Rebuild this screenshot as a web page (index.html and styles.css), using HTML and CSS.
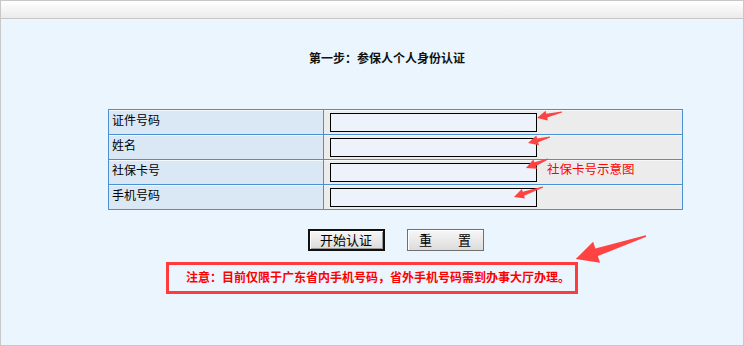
FILE: index.html
```html
<!DOCTYPE html>
<html lang="zh-CN">
<head>
    <meta charset="UTF-8"/>
    <title>参保人个人身份认证</title>
    <link rel="stylesheet" href="styles.css">
</head>
<body>
<div class="page">
    <div class="topbar"></div>
    <div class="main">
        <h3 class="step-title">第一步：参保人个人身份认证</h3>
        <div class="form-col">
            <table class="auth-table">
                <tr>
                    <td class="label">证件号码</td>
                    <td class="field"><div class="field-inner"><input type="text"/></div></td>
                </tr>
                <tr>
                    <td class="label">姓名</td>
                    <td class="field"><div class="field-inner"><input type="text"/></div></td>
                </tr>
                <tr>
                    <td class="label">社保卡号</td>
                    <td class="field"><div class="field-inner"><input type="text"/><span class="hint">社保卡号示意图</span></div></td>
                </tr>
                <tr>
                    <td class="label">手机号码</td>
                    <td class="field"><div class="field-inner"><input type="text"/></div></td>
                </tr>
            </table>
            <div class="btn-row">
                <button class="btn btn-default">开始认证</button>
                <button class="btn">重　　置</button>
            </div>
        </div>
        <div class="notice">注意：目前仅限于广东省内手机号码，省外手机号码需到办事大厅办理。</div>
    </div>

    <!-- 标注箭头 -->
    <svg class="marks" width="744" height="346" viewBox="0 0 744 346">
        <g fill="#ff4242">
            <polygon transform="translate(562 112) rotate(166.5)" points="0,-0.6 15.7,-2 15.7,-5 25.7,0 15.7,5 15.7,2 0,0.6"/>
            <polygon transform="translate(550 137) rotate(164.7)" points="0,-0.6 12.8,-2 12.8,-5 22.8,0 12.8,5 12.8,2 0,0.6"/>
            <polygon transform="translate(548 159) rotate(157.8)" points="0,-0.6 13.8,-2 13.8,-5 23.8,0 13.8,5 13.8,2 0,0.6"/>
            <polygon transform="translate(543 187) rotate(161)" points="0,-0.6 20.7,-2 20.7,-5 30.7,0 20.7,5 20.7,2 0,0.6"/>
            <polygon transform="translate(646 236) rotate(161.8)" points="0,-0.8 52,-4 52,-11 74,0 52,11 52,4 0,0.8"/>
        </g>
    </svg>
</div>
</body>
</html>
```

FILE: styles.css
```css
body {
    margin: 0;
    font-family: "Noto Sans CJK SC", "Liberation Sans", sans-serif;
    font-size: 12px;
}

.page {
    position: relative;
    width: 744px;
    height: 346px;
    box-sizing: border-box;
    border: 1px solid #c8c8c8;
    background: #eaf5fe;
    overflow: hidden;
}

.topbar {
    height: 17px;
    border-bottom: 1px solid #c6c6c6;
    background: linear-gradient(#ffffff, #ebebeb);
}

.main {
    padding-top: 31px;
}

.step-title {
    margin: 0;
    padding-left: 30px;
    text-align: center;
    font-size: 12px;
    line-height: 16px;
    font-weight: bold;
    color: #111;
}

.form-col {
    margin-left: 107px;
    width: 575px;
}

.auth-table {
    margin-top: 43px;
    width: 575px;
    border-collapse: collapse;
    table-layout: fixed;
    border: 1px solid #4a90d4;
}

.auth-table td {
    border: 1px solid #4a90d4;
    box-shadow: inset 0 1px 0 #f6f9fc;
    padding: 0;
    height: 24px;
    box-sizing: border-box;
    vertical-align: top;
}

.auth-table .label {
    width: 215px;
    background: #dae8f5;
    padding: 2px 3px;
    line-height: 16px;
    color: #000;
}

.auth-table .field {
    background: #ececec;
    padding: 3px 6px 2px;
}

.field-inner {
    display: flex;
    align-items: flex-start;
}

.field input {
    width: 207px;
    height: 19px;
    box-sizing: border-box;
    margin: 0;
    border: 1px solid #000;
    background: #eef2fa;
    padding: 0 2px;
}

.hint {
    margin-left: 10px;
    color: #f00;
    font-size: 12.5px;
    line-height: 14px;
    margin-top: -1px;
}

.btn-row {
    display: flex;
    justify-content: center;
    gap: 22px;
    margin-top: 19px;
}

.btn {
    width: 77px;
    height: 22px;
    padding: 0;
    font-family: "Noto Sans CJK SC", sans-serif;
    font-size: 13px;
    line-height: 18px;
    color: #000;
    background: linear-gradient(#f7f7f7, #dcdcdc);
    border: 1px solid #707070;
    box-shadow: inset 1px 1px 0 #fff;
}

.btn-default {
    border: 2px solid #111;
    box-shadow: inset 1px 1px 0 #fff, inset -1px -1px 0 #999;
}

.notice {
    margin-top: 11px;
    margin-left: 165px;
    width: 412px;
    height: 32px;
    box-sizing: border-box;
    border: 3px solid #ff3b3b;
    padding-left: 17px;
    line-height: 24px;
    color: #f00;
    font-weight: bold;
}

.marks {
    position: absolute;
    left: -1px;
    top: -1px;
}
```
